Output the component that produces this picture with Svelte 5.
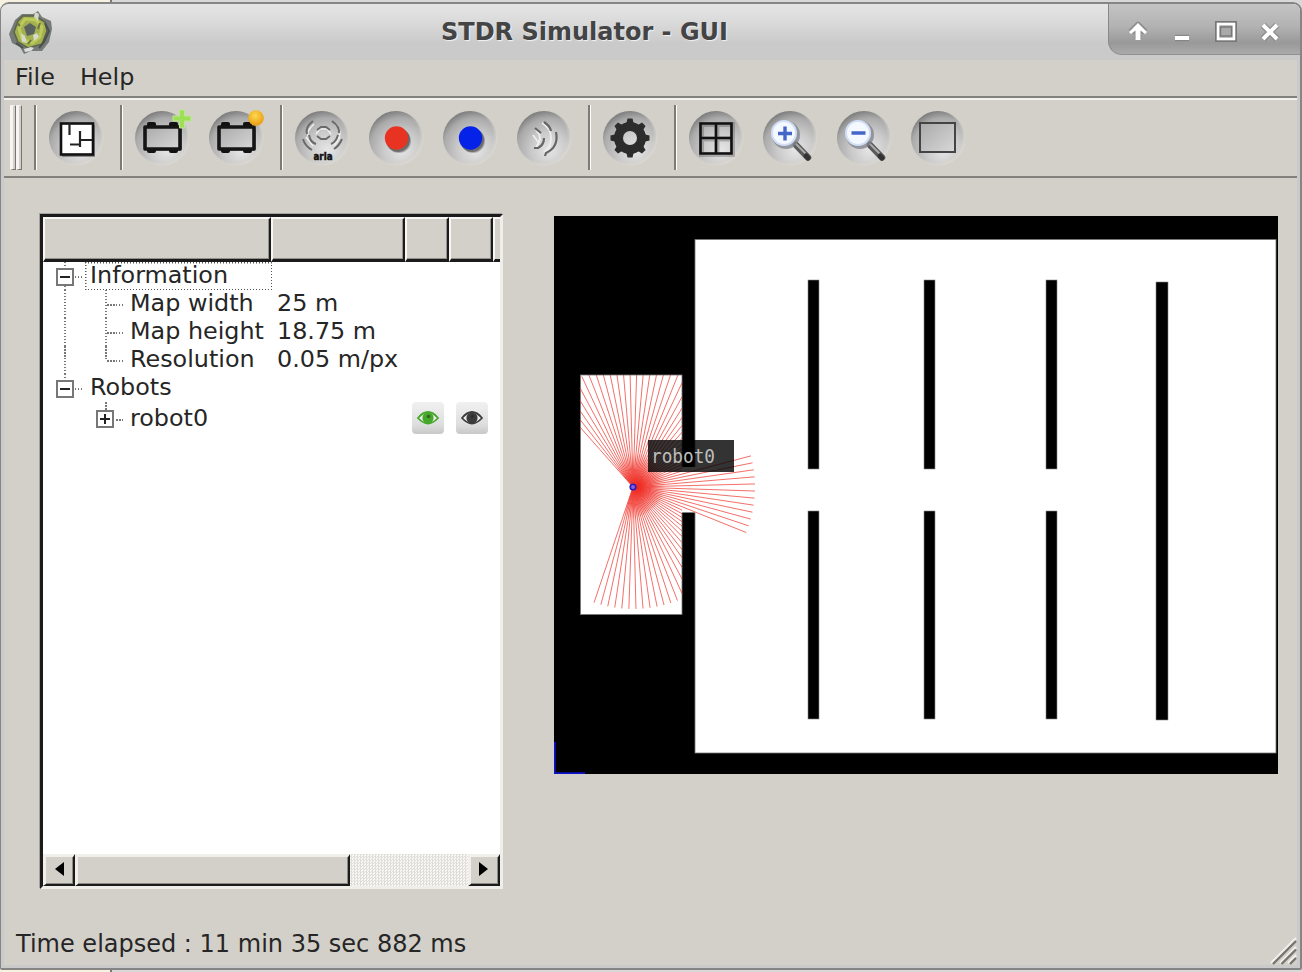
<script>
  const tools = ['sep', 'map', 'sep', 'robotAdd', 'robotLoad', 'sep', 'rfid', 'red', 'blue', 'sonar', 'sep', 'gear', 'sep', 'grid', 'zoomIn', 'zoomOut', 'fit'];

  const info = [
    ['Map width', '25 m'],
    ['Map height', '18.75 m'],
    ['Resolution', '0.05 m/px'],
  ];

  // Laser scan, in map coordinates: cast each beam to the nearest wall or to its range.
  const origin = { x: 79, y: 271 };
  const range = 122;
  const beams = [];
  for (let i = 0; i < 73; i++) {
    const a = ((-131.5 + i * 3.335) * Math.PI) / 180;
    const dx = Math.cos(a);
    const dy = Math.sin(a);
    let r = range;
    if (dy < 0) r = Math.min(r, -112 / dy);
    if (dx < 0) r = Math.min(r, -53 / dx);
    if (dx > 0) {
      const atWall = (dy / dx) * 49;
      const atExit = (dy / dx) * 62;
      if (atWall < -20 || atExit < -18.5 || atExit > 26) r = Math.min(r, 49 / dx);
    }
    beams.push([origin.x + dx * r, origin.y + dy * r]);
  }

  const walls = [
    [254, 64, 11, 189], [370, 64, 11, 189], [492, 64, 11, 189],
    [254, 295, 11, 208], [370, 295, 11, 208], [492, 295, 11, 208],
    [602, 66, 12, 438],
  ];
  const teeth = [0, 45, 90, 135, 180, 225, 270, 315];
</script>

{#snippet robot()}
  <rect x="12" y="18" width="36" height="23" rx="2" fill="#555" opacity=".5" />
  <g fill="#111">
    <rect x="13" y="12" width="9" height="6" rx="2" /><rect x="35" y="12" width="9" height="6" rx="2" />
    <rect x="13" y="37" width="9" height="6" rx="2" /><rect x="35" y="37" width="9" height="6" rx="2" />
  </g>
  <rect x="11" y="17" width="35" height="22" fill="url(#panel)" stroke="#151515" stroke-width="3.6" stroke-linejoin="round" />
{/snippet}

{#snippet lens(plus)}
  <path d="M34 35 L46 47.500" stroke="#5a5a5a" stroke-width="6.500" stroke-linecap="round" />
  <path d="M34 34 L43 43" stroke="#aaa" stroke-width="2" stroke-linecap="round" />
  <path d="M44 46l2 2" stroke="#333" stroke-width="5" stroke-linecap="round" />
  <circle cx="24" cy="25" r="14" fill="#7d828b" opacity=".75" />
  <circle cx="22" cy="23" r="12" fill="#f4f8ff" stroke="#d2def5" stroke-width="2" />
  <path d={plus ? 'M16 23.500h14M23 16.500v14' : 'M15.500 23h14'} stroke="#4466c8" stroke-width="3.4" />
{/snippet}

<div class="desktop">
  <div class="window">
    <header class="title">
      <svg class="logo" width="46" height="46" viewBox="0 0 46 46">
        <path d="M14 5 25 5 30 2 34 8 43 12 44 20 41 33 34 42 23 42 16 45 12 38 4 34 1 25 7 11Z" fill="#757b76" />
        <path d="M15 7 27 7 37 13 39 22 34 35 20 39 10 33 6 23 10 12Z" fill="#a3b050" stroke="#5c624e" stroke-width="1.5" />
        <path d="M11 19 17 10 28 11 34 18 32 28 24 34 14 30Z" fill="none" stroke="#bccb5c" stroke-width="3" />
        <path d="M16 18 22 14 28 18 26 25 19 27Z" fill="#59625f" />
        <path d="M27 3 31 5 30 12 26 8ZM13 24l4 3 2 7-5-1zM25 26l4-2 2 4-5 4z" fill="#d5d9c9" />
        <path d="M37 14l4 8-5 11-5 6M8 34l7 5" fill="none" stroke="#4a504c" stroke-width="2" />
        <path d="M16 40l7-2 3 1-3 3-6 1z" fill="#ddd" />
        <path d="M9 14l3 3M32 14l-2 6M20 35l3-4" stroke="#6c743d" stroke-width="2" />
      </svg>
      <h1>STDR Simulator - GUI</h1>
      <div class="controls">
        <svg width="192" height="52" viewBox="0 0 192 52">
          <g fill="none" stroke="#777" stroke-width="6.5" stroke-linejoin="round" opacity=".6">
            <path d="M30 35V23M23 28l7-7 7 7M67 34h14M155 21l14 14M169 21l-14 14" />
          </g>
          <path d="M21 28l9-9 9 9-2 2-4.500-3.500V36h-5v-9.500L23 30z" fill="#fff" />
          <rect x="67" y="32" width="14" height="4" fill="#fff" />
          <rect x="110" y="20" width="16" height="15" fill="none" stroke="#777" stroke-width="6" />
          <rect x="110" y="20" width="16" height="15" fill="#aaa" stroke="#fff" stroke-width="2.6" />
          <rect x="112.5" y="23" width="11" height="9" fill="#aaa" stroke="#777" stroke-width="1.4" />
          <path d="M155 21l14 14M169 21l-14 14" stroke="#fff" stroke-width="4" />
        </svg>
      </div>
    </header>

    <div class="client">
      <nav class="menu"><span>File</span><span>Help</span></nav>

      <div class="toolbar">
        <div class="grip"><i></i><i></i></div>
        {#each tools as t}
          {#if t === 'sep'}
            <div class="sep"></div>
          {:else}
            <div class="tool">
              <svg width="56" height="56" viewBox="0 0 56 56" overflow="visible">
                <defs>
                  <radialGradient id="ball" cx=".6" cy=".72" r=".74">
                    <stop offset="0" stop-color="#e6e6e6" /><stop offset=".45" stop-color="#cacaca" />
                    <stop offset=".8" stop-color="#aaa" /><stop offset="1" stop-color="#7c7c7c" />
                  </radialGradient>
                  <radialGradient id="rim" cx=".46" cy=".46" r=".54">
                    <stop offset=".84" stop-color="#d3d0c9" stop-opacity="0" /><stop offset="1" stop-color="#d9d7d1" />
                  </radialGradient>
                  <linearGradient id="panel" x2="1" y2="1">
                    <stop offset="0" stop-color="#aaa" /><stop offset="1" stop-color="#d8d8d8" />
                  </linearGradient>
                  <radialGradient id="orange" cx=".45" cy=".35" r=".65">
                    <stop offset="0" stop-color="#ffd850" /><stop offset="1" stop-color="#e79c10" />
                  </radialGradient>
                </defs>
                <circle cx="28" cy="28" r="27" fill="url(#ball)" />
                <circle cx="28" cy="28" r="27.5" fill="url(#rim)" />
                {#if t === 'map'}
                  <rect x="14" y="15" width="33" height="32" fill="#444" opacity=".5" />
                  <rect x="13" y="13.5" width="32" height="31" fill="#fff" stroke="#111" stroke-width="2.6" />
                  <path d="M21.500 13v12M32 21v16M22 34.5h10M32 30h12" fill="none" stroke="#222" stroke-width="2.2" />
                {:else if t === 'robotAdd'}
                  {@render robot()}
                  <path d="M45.5 0h5v6h6.5v5h-6.5v7h-5v-7h-6.5v-5h6.5z" fill="#9ee055" stroke="#bde892" />
                {:else if t === 'robotLoad'}
                  {@render robot()}
                  <circle cx="48" cy="8" r="7.8" fill="url(#orange)" />
                {:else if t === 'rfid'}
                  <g fill="none" stroke="#eee" stroke-width="1.600">
                    <path d="M22 24l4-5h7l4 5M20 14q-9 8-5 14M41 14q8 8 3 14M12 27l7 9M46 27l-6 9" />
                  </g>
                  <g fill="none" stroke="#6a6a6a" stroke-width="2">
                    <path d="M23 20l4-3h5l4 3M23 26l4 3h5l4-3M19 11q-8 6-6 13M38 11q8 6 7 12M15 25q1 7 7 9M44 25q-2 7-7 9M9 29q2 7 9 11M48 29q-3 7-8 10" />
                  </g>
                  <text x="19.500" y="49.500" textLength="19" lengthAdjust="spacingAndGlyphs" class="tag">aria</text>
                {:else if t === 'red' || t === 'blue'}
                  <circle cx="31" cy="31" r="12" fill="#444" opacity=".35" />
                  <circle cx="30" cy="30" r="12" fill="#444" opacity=".6" />
                  <circle cx="28.500" cy="28" r="11.700" fill={t === 'red' ? '#e83222' : '#0522e8'} />
                {:else if t === 'sonar'}
                  <g fill="none" stroke="#eee" stroke-width="1.800">
                    <path d="M26 13q9 5 9 15t-7 14M20 20q8 8 0 17M17 25l5 7" />
                  </g>
                  <g fill="none" stroke="#666" stroke-width="2.200">
                    <path d="M28 12q6 4 7 9M19 18l6 5M28 28q0 7-6 10h-4M40 22q3 15-10 21l-1 3" />
                  </g>
                {:else if t === 'gear'}
                  <g fill="#2c2c2c">
                    {#each teeth as a}<path d="M23.500 17l2-8.500h5l2 8.500z" transform="rotate({a} 28 28)" />{/each}
                  </g>
                  <circle cx="28" cy="28" r="11.500" fill="none" stroke="#2c2c2c" stroke-width="9" />
                {:else if t === 'grid'}
                  <path d="M13.500 14.500h31v30h-31zM29 14v31M13 29h32" fill="none" stroke="#555" stroke-width="5" opacity=".35" />
                  <path d="M12.500 13.500h31v30h-31zM28 13v31M12 28h32" fill="none" stroke="#111" stroke-width="2.600" />
                {:else if t === 'zoomIn' || t === 'zoomOut'}
                  {@render lens(t === 'zoomIn')}
                {:else if t === 'fit'}
                  <rect x="10" y="13" width="35" height="29" fill="url(#panel)" stroke="#444" stroke-width="2" />
                {/if}
              </svg>
            </div>
          {/if}
        {/each}
      </div>

      <main>
        <section class="tree">
          <div class="head">
            <b class="c1"></b><b class="c2"></b><b class="c3"></b><b class="c3"></b><b class="c5"></b>
          </div>
          <div class="rows">
            <div class="row">
              <span class="indent one"><i class="line full"></i><i class="box"></i><i class="stub"></i></span>
              <span class="focus label">Information</span>
            </div>
            {#each info as [name, value], i}
              <div class="row">
                <span class="indent one"><i class="line full"></i></span>
                <span class="indent two"><i class="line" class:full={i < 2} class:half={i === 2}></i><i class="dash"></i></span>
                <span class="label name">{name}</span>
                <span class="label">{value}</span>
              </div>
            {/each}
            <div class="row">
              <span class="indent one"><i class="line half"></i><i class="box"></i><i class="stub"></i></span>
              <span class="label">Robots</span>
            </div>
            <div class="row tall">
              <span class="indent one"></span>
              <span class="indent two"><i class="line half"></i><i class="box plus"></i><i class="stub"></i></span>
              <span class="label name bot">robot0</span>
              {#each ['#46a82a', '#3c3c3c'] as c}
                <span class="eye">
                  <svg width="24" height="18" viewBox="0 0 24 18">
                    <path d="M2 9Q12-3 22 9Q12 20 2 9Z" fill="#eee" stroke={c} stroke-width="1.800" />
                    <circle cx="12" cy="9" r="5.600" fill={c} /><circle cx="12.500" cy="7.500" r="1.800" fill="#222" opacity=".5" />
                  </svg>
                </span>
              {/each}
            </div>
          </div>
          <div class="scroll">
            <span class="btn"><svg width="10" height="14"><path d="M9 0v14L0 7z" /></svg></span>
            <span class="btn thumb"></span>
            <span class="track"></span>
            <span class="btn right"><svg width="10" height="14"><path d="M1 0v14l9-7z" /></svg></span>
          </div>
        </section>

        <svg class="world" width="724" height="558" viewBox="0 0 724 558">
          <defs>
            <radialGradient id="glow"><stop offset="0" stop-color="#f02018" /><stop offset=".3" stop-color="#f02018" stop-opacity=".6" /><stop offset="1" stop-color="#f02018" stop-opacity="0" /></radialGradient>
          </defs>
          <rect width="724" height="558" fill="#000" />
          <rect x="141" y="23.500" width="581" height="513.500" fill="#fff" stroke="#777" stroke-width=".8" />
          <rect x="26.500" y="159" width="101.500" height="239.500" fill="#fff" stroke="#777" stroke-width=".8" />
          <rect x="127" y="251" width="15" height="45.500" fill="#fff" />
          {#each walls as [x, y, w, h]}
            <rect {x} {y} width={w} height={h} stroke="#888" stroke-width=".6" />
          {/each}
          <path d="M79 271L56 245Q79 228 102 245Q122 271 102 289Q88 304 67 305Z" fill="url(#glow)" />
          <g stroke="#ee2a20" stroke-width=".9" opacity=".75">
            {#each beams as [x, y]}<line x1={origin.x} y1={origin.y} x2={x} y2={y} />{/each}
          </g>
          <circle cx="79" cy="271" r="2.800" fill="#8a60d0" stroke="#2a18c0" stroke-width="1.600" />
          <rect x="94" y="224" width="86" height="32" fill="#000" opacity=".8" />
          <text x="97" y="247" textLength="64" lengthAdjust="spacingAndGlyphs">robot0</text>
          <path d="M.8 526v31.200H31" fill="none" stroke="#0b12c8" stroke-width="1.800" />
        </svg>
      </main>

      <footer>
        <span>Time elapsed : 11 min 35 sec 882 ms</span>
        <svg width="28" height="28" viewBox="0 0 28 28">
          <path d="M2 26 27 1M11 26 27 10M19 26l8-8" stroke="#f2f1ee" stroke-width="2" />
          <path d="M4 27 27 4M12.500 27 27 12.500M21 27l6-6" stroke="#77756f" stroke-width="2.400" />
        </svg>
      </footer>
    </div>
  </div>
</div>

<style>
  :global(body) { margin: 0; overflow: hidden; }
  .desktop {
    width: 1302px; height: 972px; box-sizing: border-box; padding: 2px 0;
    background: linear-gradient(90deg, #f7f2df 110px, #777 110px 112px, #d8d8d8 112px);
    font: 23.850px/28px "DejaVu Sans", sans-serif; color: #262626;
  }
  .window {
    height: 968px; box-sizing: border-box; display: flex; flex-direction: column;
    border: 2px solid #858585; border-left-width: 1px; border-radius: 9px 9px 2px 2px;
    background: #cacaca; overflow: hidden;
  }
  .title {
    flex: none; height: 56px; display: flex;
    background: linear-gradient(#e5e5e5, #d9d9d9 35%, #cacaca 70%, #cacaca);
  }
  .logo { margin: 5px 0 0 7px; }
  h1 {
    flex: 1; margin: 14px 0 0 7px; font-size: 24px; line-height: 28px; font-weight: bold;
    color: #444; text-align: center; text-shadow: 1px 1px 1px #f2f2f2; white-space: nowrap;
  }
  .controls {
    width: 192px; height: 51px; box-sizing: border-box; overflow: hidden;
    border-left: 1px solid #888; border-bottom: 1px solid #909090; border-bottom-left-radius: 14px;
    background: linear-gradient(#c4c4c4, #b2b2b2 45%, #999 78%, #aaa);
  }
  .controls svg { display: block; margin: 0 0 0 -1px; }
  .client { flex: 1; margin: 0 3px 3px; background: #d3d0c9; display: flex; flex-direction: column; }
  .menu { height: 36px; display: flex; gap: 25px; padding: 3px 0 0 11px; box-sizing: border-box; }
  .toolbar {
    height: 82px; box-sizing: border-box; display: flex; border-top: 2px solid #82817d;
    border-bottom: 2px solid #82817d; box-shadow: inset 0 2px #f3f2ef; padding: 7px 0 0 6px;
  }
  .grip { width: 17px; height: 65px; display: flex; }
  .grip i { width: 6px; box-sizing: border-box; border: solid; border-width: 1px 1.500px 1.500px 3px; border-color: #eee #77756f #77756f #f6f5f3; }
  .sep { width: 12px; height: 65px; box-sizing: border-box; padding-left: 7px; }
  .sep::before { content: ''; display: block; width: 1px; height: 65px; border-left: 2px solid #7d7b76; background: #fff; }
  .tool { width: 74px; height: 66px; display: flex; justify-content: center; padding-top: 5px; box-sizing: border-box; }
  .tag { font: bold 10px "DejaVu Sans", sans-serif; fill: #111; stroke: #111; stroke-width: .5px; }
  main { height: 711px; padding: 36px 0 0 36px; box-sizing: border-box; display: flex; gap: 51px; }
  .tree {
    width: 463px; height: 675px; box-sizing: border-box; background: #fff; display: flex; flex-direction: column;
    border: 3px solid #efeeea; border-top-color: #1b1b1b; border-left-color: #1b1b1b;
    box-shadow: -1px -1px #a5a39d;
  }
  .head { height: 45px; display: flex; background: #d3d0c9; overflow: hidden; flex: none; }
  .head b {
    box-sizing: border-box; border: solid; border-width: 2px 2px 3px 2px;
    border-color: #f8f7f5 #1b1b1b #1b1b1b #f8f7f5; box-shadow: inset -1px -1px #93918c;
  }
  .c1 { width: 228px; } .c2 { width: 134px; } .c3 { width: 44px; }
  .head .c5 { flex: 1; border-right: 0; box-shadow: none; }
  .rows { flex: 1; padding-left: 1px; }
  .row { height: 28px; display: flex; }
  .tall { height: 34px; }
  .label { line-height: 27px; white-space: pre; padding-left: 5px; }
  .name { width: 142px; }
  .focus {
    width: 187px; height: 28px; padding: 0 0 0 5px; box-sizing: border-box;
    --x: repeating-linear-gradient(90deg, #555 0 1.500px, transparent 1.500px 3px);
    --y: repeating-linear-gradient(#555 0 1.500px, transparent 1.500px 3px);
    background: var(--x) 0 0 / 100% 1.500px no-repeat, var(--x) 0 100% / 100% 1.500px no-repeat,
      var(--y) 0 0 / 1.500px 100% no-repeat, var(--y) 100% 0 / 1.500px 100% no-repeat;
  }
  .indent { position: relative; width: 41px; flex: none; }
  .two { width: 40px; }
  .line, .dash, .stub { position: absolute; }
  .line { left: 20px; top: 0; width: 1.500px; background: repeating-linear-gradient(#777 0 1.500px, #fff 1.500px 3px); }
  .full { height: 28px; }
  .half { height: 50%; }
  .dash, .stub { top: 14px; height: 1.500px; background: repeating-linear-gradient(90deg, #777 0 1.500px, #fff 1.500px 3px); }
  .dash { left: 22px; width: 16px; }
  .stub { left: 31px; width: 8px; }
  .tall .stub { top: 17px; }
  .box {
    position: absolute; left: 12px; top: 6px; width: 18px; height: 18px; box-sizing: border-box;
    border: 2px solid #777; background: #fff;
  }
  .two .box { top: 8px; left: 11px; }
  .box::before { content: ''; position: absolute; left: 2px; top: 6px; width: 10px; height: 2px; background: #222; }
  .plus::after { content: ''; position: absolute; left: 6px; top: 2px; width: 2px; height: 10px; background: #222; }
  .bot { width: 282px; line-height: 32px; }
  .eye {
    width: 32px; height: 32px; margin-right: 12px; border-radius: 4px; display: flex; align-items: center; justify-content: center;
    background: linear-gradient(#f1f1f1, #dedede 70%, #c8c8c8);
  }
  .scroll { height: 32px; display: flex; flex: none; }
  .btn {
    width: 32px; box-sizing: border-box; background: #d3d0c9; display: flex; align-items: center; justify-content: center;
    border: solid; border-width: 3px 2px 2px 3px; border-color: #f0efec #1b1b1b #1b1b1b #f0efec; box-shadow: inset -1px -1px #8d8b86;
  }
  .btn svg { margin-top: -3px; }
  .right svg { margin-left: -3px; }
  .thumb { width: 275px; }
  .track { flex: 1; background: repeating-conic-gradient(#e0ded9 0 25%, #f8f7f5 0 50%) 0 0 / 3px 3px; }
  .world { margin-top: 2px; }
  .world text { font: 19px "DejaVu Sans Mono", monospace; fill: #bdbdbd; }
  footer { flex: 1; display: flex; justify-content: space-between; padding: 41px 0 0 12px; font-size: 24px; }
  footer svg { margin-top: 7px; }
</style>
